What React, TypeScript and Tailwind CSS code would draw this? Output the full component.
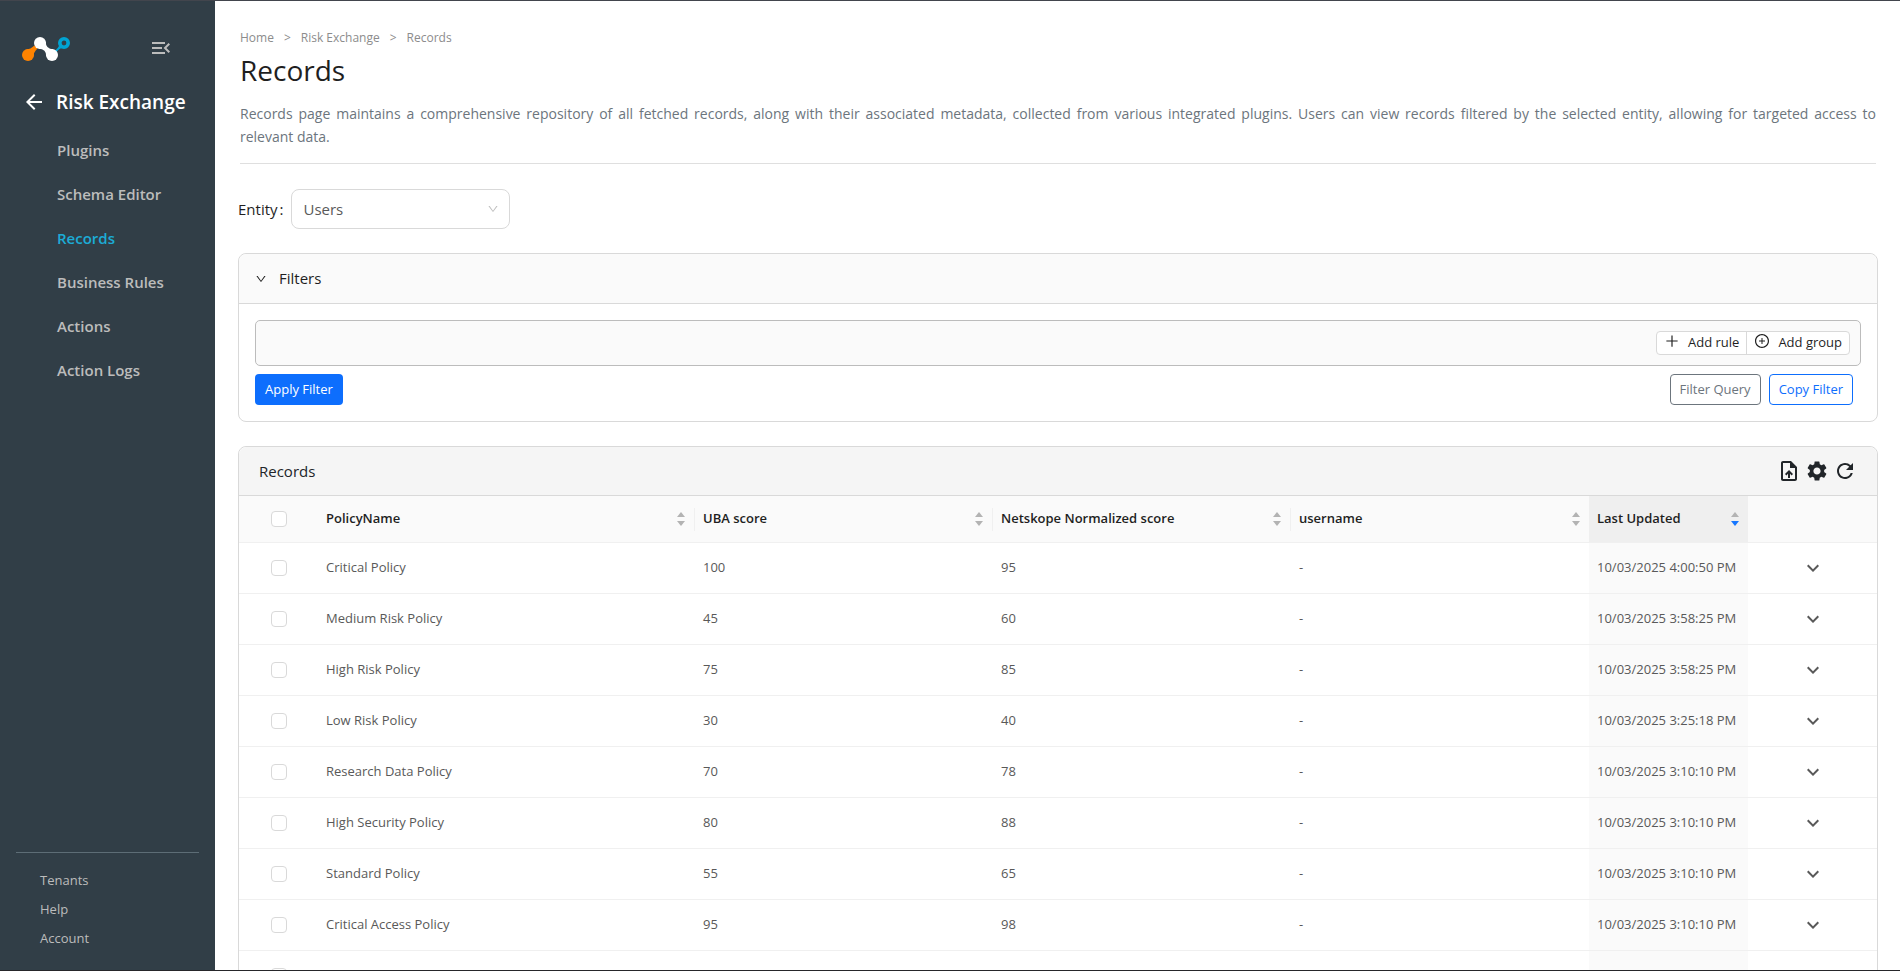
import { useState } from 'react';
import {
  MdArrowBack,
  MdKeyboardArrowDown,
  MdMenuOpen,
  MdOutlineUploadFile,
  MdRefresh,
  MdSettings,
} from 'react-icons/md';
import { AiOutlineDown, AiOutlinePlus, AiOutlinePlusCircle } from 'react-icons/ai';

const menuItems = ['Plugins', 'Schema Editor', 'Records', 'Business Rules', 'Actions', 'Action Logs'];
const footerItems = ['Tenants', 'Help', 'Account'];
const breadcrumbs = ['Home', 'Risk Exchange', 'Records'];

const columns = [
  { label: 'PolicyName', width: 'w-[377px]' },
  { label: 'UBA score', width: 'w-[298px]' },
  { label: 'Netskope Normalized score', width: 'w-[298px]' },
  { label: 'username', width: 'w-[298px]' },
];

const records = [
  { policy: 'Critical Policy', uba: 100, normalized: 95, updated: '10/03/2025 4:00:50 PM' },
  { policy: 'Medium Risk Policy', uba: 45, normalized: 60, updated: '10/03/2025 3:58:25 PM' },
  { policy: 'High Risk Policy', uba: 75, normalized: 85, updated: '10/03/2025 3:58:25 PM' },
  { policy: 'Low Risk Policy', uba: 30, normalized: 40, updated: '10/03/2025 3:25:18 PM' },
  { policy: 'Research Data Policy', uba: 70, normalized: 78, updated: '10/03/2025 3:10:10 PM' },
  { policy: 'High Security Policy', uba: 80, normalized: 88, updated: '10/03/2025 3:10:10 PM' },
  { policy: 'Standard Policy', uba: 55, normalized: 65, updated: '10/03/2025 3:10:10 PM' },
  { policy: 'Critical Access Policy', uba: 95, normalized: 98, updated: '10/03/2025 3:10:10 PM' },
];

const checkboxClass = 'block size-4 appearance-none rounded border border-[#d9d9d9] bg-white checked:border-[#1677ff] checked:bg-[#1677ff]';

function Logo() {
  return (
    <svg viewBox="0 0 48 24" className="h-6 w-12" aria-label="Netskope">
      <circle cx="6" cy="18" r="6" fill="#ff8300" />
      <path d="M3 13 Q9 12 12.5 8.5 L15.5 11.5 Q11.5 15 11 21 Z" fill="#ff8300" />
      <path d="M32 14 Q37 11 37.5 7 L41 11 Q37 11 34 16 Z" fill="#00a3d3" />
      <circle cx="42" cy="6" r="4.2" fill="none" stroke="#00a3d3" strokeWidth="3.6" />
      <circle cx="18" cy="6" r="6" fill="#fff" />
      <circle cx="30" cy="18" r="6" fill="#fff" />
      <path d="M23.8 4.5 Q23.5 12 31.5 12.2 L24.2 19.5 Q24.5 12 16.5 11.8 Z" fill="#fff" />
    </svg>
  );
}

function Sorter({ active }: { active?: boolean }) {
  return (
    <svg viewBox="0 0 10 14" className="h-3.5 w-2.5 shrink-0">
      <path d="M5 0 L9 5 H1 Z" fill="#b3b3b3" />
      <path d="M5 14 L9 9 H1 Z" fill={active ? '#1677ff' : '#b3b3b3'} />
    </svg>
  );
}

function Sidebar() {
  return (
    <aside className="flex w-[215px] shrink-0 flex-col bg-[#313e47] text-[#bcbcbc]">
      <div className="flex items-start justify-between pt-9 pr-[42px] pl-[22px]">
        <Logo />
        <button type="button" aria-label="Collapse menu" className="-mt-px">
          <MdMenuOpen className="size-6" />
        </button>
      </div>
      <button type="button" className="mt-[25px] flex items-center gap-2.5 pl-[22px] text-white">
        <MdArrowBack className="size-6" />
        <span className="text-[19px] leading-8 font-semibold">Risk Exchange</span>
      </button>
      <nav className="mt-2.5 flex flex-col pl-[57px]">
        {menuItems.map((item) => (
          <a key={item} href="#" className={`text-[15px] leading-[44px] font-semibold ${item === 'Records' ? 'text-[#1cacd6]' : ''}`}>
            {item}
          </a>
        ))}
      </nav>
      <div className="mx-4 mt-auto mb-[17px] flex flex-col border-t border-[#5d6d76] pt-[13px] pl-6">
        {footerItems.map((item) => (
          <a key={item} href="#" className="text-[13px] leading-[29px] font-medium">{item}</a>
        ))}
      </div>
    </aside>
  );
}

function FiltersPanel() {
  const [open, setOpen] = useState(true);

  return (
    <section className="mt-6 rounded-lg border border-[#d9d9d9]">
      <button
        type="button"
        onClick={() => setOpen(!open)}
        className="flex h-[49px] w-full items-center gap-3 rounded-t-lg bg-[#fafafa] px-4 text-[15px] font-medium text-[#1f1f1f]"
      >
        <AiOutlineDown className="size-3" />
        Filters
      </button>
      {open && (
        <div className="border-t border-[#d9d9d9] p-4">
          <div className="flex h-[46px] items-center justify-end rounded-[5px] border border-[#bcbcbc] bg-[#fafafa] px-2.5">
            <div className="flex h-6 rounded border border-[#d9d9d9] bg-white text-[13px] text-[#1f1f1f]">
              <button type="button" className="flex items-center gap-2 border-r border-[#d9d9d9] px-[7px]">
                <AiOutlinePlus className="mb-1 size-4" />
                Add rule
              </button>
              <button type="button" className="flex items-center gap-2 px-[7px]">
                <AiOutlinePlusCircle className="mb-1 size-4" />
                Add group
              </button>
            </div>
          </div>
          <div className="mt-2 flex gap-2 pr-2 text-[13px]">
            <button type="button" className="mr-auto h-[31px] rounded bg-[#0d6efd] px-2.5 text-white">Apply Filter</button>
            <button type="button" className="h-[31px] rounded border border-[#6c757d] px-[9px] text-[#6c757d]">Filter Query</button>
            <button type="button" className="h-[31px] rounded border border-[#0d6efd] px-[9px] text-[#0d6efd]">Copy Filter</button>
          </div>
        </div>
      )}
    </section>
  );
}

function RecordsTable() {
  return (
    <section className="mt-6 rounded-t-lg border border-[#d9d9d9]">
      <div className="flex h-12 items-center justify-between rounded-t-lg bg-[#f5f5f5] px-5 text-[#212529]">
        <h2 className="text-[15px] font-medium">Records</h2>
        <div className="flex gap-1">
          <button type="button" aria-label="Export"><MdOutlineUploadFile className="size-6" /></button>
          <button type="button" aria-label="Settings"><MdSettings className="size-6" /></button>
          <button type="button" aria-label="Refresh"><MdRefresh className="size-6" /></button>
        </div>
      </div>
      <table className="w-full table-fixed border-t border-[#d9d9d9] text-left text-[13px]">
        <thead>
          <tr className="h-[47px] border-b border-[#f0f0f0] bg-[#fafafa] text-[#1f1f1f]">
            <th className="w-[79px] pl-8"><input type="checkbox" aria-label="Select all" className={checkboxClass} /></th>
            {columns.map((column, index) => (
              <th key={column.label} className={`${column.width} font-semibold`}>
                <div className={`flex h-[23px] items-center justify-between px-2 ${index < 3 ? 'border-r border-[#f0f0f0]' : ''}`}>
                  {column.label}
                  <Sorter />
                </div>
              </th>
            ))}
            <th className="w-[159px] bg-[#efefef] font-semibold">
              <div className="flex h-[23px] items-center justify-between px-2">
                Last Updated
                <Sorter active />
              </div>
            </th>
            <th className="w-[129px]" aria-label="Details" />
          </tr>
        </thead>
        <tbody className="text-[#595959]">
          {records.map((record) => (
            <tr key={record.policy} className="h-[51px] border-b border-[#f0f0f0]">
              <td className="pl-8"><input type="checkbox" aria-label={`Select ${record.policy}`} className={checkboxClass} /></td>
              <td className="px-2">{record.policy}</td>
              <td className="px-2">{record.uba}</td>
              <td className="px-2">{record.normalized}</td>
              <td className="px-2">-</td>
              <td className="bg-[#fafafa] px-2 whitespace-nowrap">{record.updated}</td>
              <td>
                <button type="button" aria-label={`Expand ${record.policy}`} className="mx-auto block">
                  <MdKeyboardArrowDown className="size-6" />
                </button>
              </td>
            </tr>
          ))}
          <tr className="h-[51px]">
            <td className="pl-8"><input type="checkbox" aria-label="Select row" className={checkboxClass} /></td>
            <td colSpan={4} />
            <td className="bg-[#fafafa]" />
            <td />
          </tr>
        </tbody>
      </table>
    </section>
  );
}

export default function App() {
  return (
    <div className="flex h-screen overflow-hidden border-y border-t-[#42454d] border-b-[#26262a] bg-white font-['Open_Sans','Noto_Sans',sans-serif]">
      <Sidebar />
      <main className="min-w-0 flex-1 overflow-hidden pt-[25px] pr-[22px] pl-[23px]">
        <header className="mx-0.5 border-b border-[#dfdfdf] pb-[15px]">
          <nav aria-label="Breadcrumb" className="flex gap-2.5 text-xs leading-6 text-[#8c8c8c]">
            {breadcrumbs.map((crumb, index) => (
              <span key={crumb} className="flex gap-2.5">
                {index > 0 && <span>&gt;</span>}
                <a href="#">{crumb}</a>
              </span>
            ))}
          </nav>
          <h1 className="text-[28px] leading-10 text-[#1f1f1f]">Records</h1>
          <p className="mt-3 text-justify text-sm leading-[23px] text-[#6c757d]">
            Records page maintains a comprehensive repository of all fetched records, along with their associated metadata, collected from various integrated plugins. Users can view records filtered by the selected entity, allowing for targeted access to relevant&nbsp;data.
          </p>
        </header>
        <div className="mt-[25px] flex items-center gap-2">
          <label htmlFor="entity" className="flex gap-0.5 text-[15px] text-[#1f1f1f]">
            <span>Entity</span>
            <span>:</span>
          </label>
          <div className="relative w-[219px]">
            <select id="entity" className="h-10 w-full appearance-none rounded-lg border border-[#d9d9d9] bg-white px-[11px] text-[15px] text-[#595959]">
              <option>Users</option>
            </select>
            <AiOutlineDown className="pointer-events-none absolute top-3.5 right-[11px] size-3 text-[#bfbfbf]" />
          </div>
        </div>
        <FiltersPanel />
        <RecordsTable />
      </main>
    </div>
  );
}
